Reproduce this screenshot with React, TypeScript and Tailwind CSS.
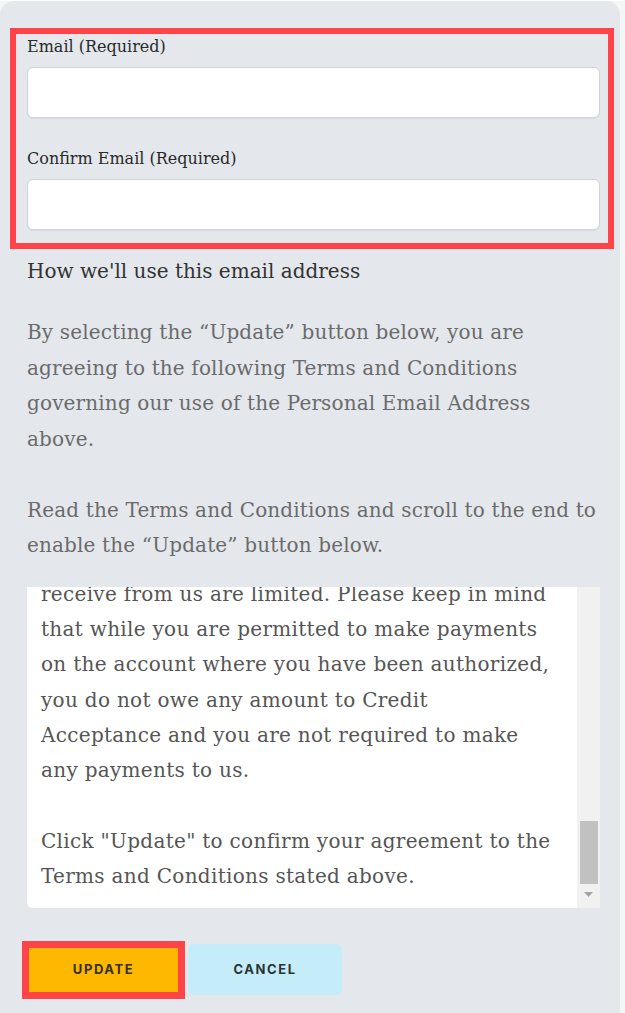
import React from "react";

const serif = "font-['DejaVu_Serif',serif]";

function Field({ label, className = "" }: { label: string; className?: string }) {
  return (
    <div className={className}>
      <label className={`block text-[16px] leading-[20px] text-[#2a2a2a] ${serif}`}>{label}</label>
      <input
        type="email"
        className="mt-[10px] block h-[51px] w-full rounded-[6px] border border-[#cfd3da] bg-white shadow-[0_1px_1px_rgba(0,0,0,0.06)] outline-none"
      />
    </div>
  );
}

export default function App() {
  return (
    <div className="min-h-screen bg-[#f4f5f7]">
      <div className="mt-px min-h-[1012px] w-[620px] rounded-t-[14px] bg-[#e4e7ec] pl-[27px] pr-[20px] pt-[27px]">
        {/* highlighted email fields */}
        <div className="-ml-[17px] -mr-[14px] border-[6px] border-[#ff4449] pb-[13px] pl-[11px] pr-[8px] pt-[3px]">
          <Field label="Email (Required)" />
          <Field label="Confirm Email (Required)" className="mt-[31px]" />
        </div>

        <h3 className={`mt-[10px] text-[20px] leading-[24px] text-[#333] ${serif}`}>
          How we'll use this email address
        </h3>

        <div className={`-mr-[4px] mt-[32px] text-[20px] leading-[35.5px] tracking-[0.15px] text-[#6b6b6b] ${serif}`}>
          <p>
            By selecting the “Update” button below, you are agreeing to the following Terms and
            Conditions governing our use of the Personal Email Address above.
          </p>
          <p className="mt-[35.5px]">
            Read the Terms and Conditions and scroll to the end to enable the “Update” button below.
          </p>
        </div>

        {/* terms, scrolled to the end */}
        <div className="mt-[23px] flex h-[321px] overflow-hidden rounded-bl-[6px] bg-white">
          <div
            className={`flex flex-1 flex-col justify-end overflow-hidden pb-[13px] pl-[14px] pr-[24px] text-[20px] leading-[35.3px] tracking-[0.3px] text-[#555] ${serif}`}
          >
            <div className="shrink-0">
              <p>
                As an authorized user you may view account details and make payments, but the
                notices and messages that you
                <br />
                receive from us are limited. Please keep in mind that while you are permitted to
                make payments on the account where you have been authorized, you do not owe any
                amount to Credit Acceptance and you are not required to make any payments to us.
              </p>
              <p className="mt-[35.3px]">
                Click "Update" to confirm your agreement to the Terms and Conditions stated above.
              </p>
            </div>
          </div>
          <div className="flex w-[23px] shrink-0 flex-col bg-[#f1f1f1]">
            <div className="h-[234px]" />
            <div className="ml-[3px] h-[63px] w-[18px] bg-[#c1c1c1]" />
            <div className="flex flex-1 items-center justify-center pb-[3px]">
              <svg width="9" height="5" viewBox="0 0 9 5">
                <path d="M0 0h9L4.5 5z" fill="#a3a3a3" />
              </svg>
            </div>
          </div>
        </div>

        {/* actions */}
        <div className="mt-[33px] flex items-center">
          <div className="-ml-[5px] border-[7px] border-[#ff4449]">
            <button className="flex h-[44px] w-[149px] items-center justify-center bg-[#ffb800] font-['Inter',sans-serif] text-[13px] font-bold tracking-[0.12em] text-[#33301f]">
              UPDATE
            </button>
          </div>
          <button className="ml-[3px] flex h-[51px] w-[154px] items-center justify-center rounded-[6px] bg-[#c5edf9] font-['Inter',sans-serif] text-[13px] font-bold tracking-[0.12em] text-[#2c3236]">
            CANCEL
          </button>
        </div>
      </div>
    </div>
  );
}
